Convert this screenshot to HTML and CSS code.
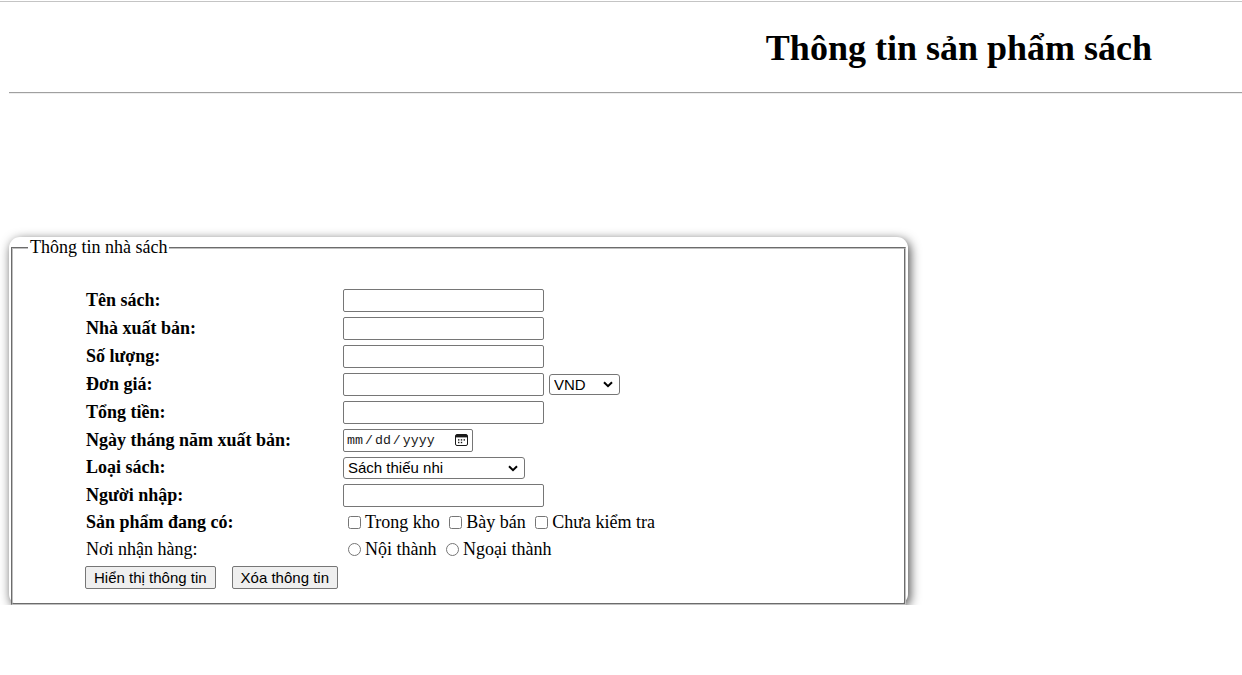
FILE: index.html
```html
<!DOCTYPE html>
<html lang="vi">
<head>
<meta charset="utf-8">
<title>Thông tin sản phẩm sách</title>
<link rel="stylesheet" href="styles.css">
</head>
<body>
<div class="top-rule"></div>
<div class="page">
  <header class="page-header">
    <h1 class="page-title">Thông tin sản phẩm sách</h1>
  </header>
  <hr class="divider">
  <div class="panel">
    <fieldset class="book-form">
      <legend class="book-legend">Thông tin nhà sách</legend>
      <table class="form-table">
        <tr>
          <td class="label-cell strong">Tên sách:</td>
          <td class="field-cell"><input class="text-input" type="text"></td>
        </tr>
        <tr>
          <td class="label-cell strong">Nhà xuất bản:</td>
          <td class="field-cell"><input class="text-input" type="text"></td>
        </tr>
        <tr>
          <td class="label-cell strong">Số lượng:</td>
          <td class="field-cell"><input class="text-input" type="text"></td>
        </tr>
        <tr>
          <td class="label-cell strong">Đơn giá:</td>
          <td class="field-cell">
            <div class="inline-fields">
              <input class="text-input" type="text">
              <span class="select-wrap">
                <select class="select-currency"><option>VND</option><option>USD</option></select>
                <svg class="chevron" width="10" height="7" viewBox="0 0 10 7"><path d="M1 1.2 L5 5.2 L9 1.2" fill="none" stroke="#000" stroke-width="2"/></svg>
              </span>
            </div>
          </td>
        </tr>
        <tr>
          <td class="label-cell strong">Tổng tiền:</td>
          <td class="field-cell"><input class="text-input" type="text"></td>
        </tr>
        <tr>
          <td class="label-cell strong">Ngày tháng năm xuất bản:</td>
          <td class="field-cell">
            <span class="date-field">
              <input class="date-text" type="text" placeholder="mm / dd / yyyy">
              <svg class="calendar" width="13" height="12" viewBox="0 0 13 12">
                <rect x="0.5" y="0.5" width="12" height="11" rx="1.5" fill="none" stroke="#1a1a1a" stroke-width="1"/>
                <rect x="1" y="1" width="11" height="2.4" fill="#1a1a1a"/>
                <rect x="3" y="5.2" width="1.4" height="1.4" fill="#1a1a1a"/>
                <rect x="5.8" y="5.2" width="1.4" height="1.4" fill="#1a1a1a"/>
                <rect x="8.6" y="5.2" width="1.4" height="1.4" fill="#1a1a1a"/>
                <rect x="3" y="7.8" width="1.4" height="1.4" fill="#1a1a1a"/>
                <rect x="5.8" y="7.8" width="1.4" height="1.4" fill="#1a1a1a"/>
              </svg>
            </span>
          </td>
        </tr>
        <tr>
          <td class="label-cell strong">Loại sách:</td>
          <td class="field-cell">
            <span class="select-wrap">
              <select class="select-type"><option>Sách thiếu nhi</option><option>Sách giáo khoa</option></select>
              <svg class="chevron" width="10" height="7" viewBox="0 0 10 7"><path d="M1 1.2 L5 5.2 L9 1.2" fill="none" stroke="#000" stroke-width="2"/></svg>
            </span>
          </td>
        </tr>
        <tr>
          <td class="label-cell strong">Người nhập:</td>
          <td class="field-cell"><input class="text-input" type="text"></td>
        </tr>
        <tr>
          <td class="label-cell strong">Sản phẩm đang có:</td>
          <td class="field-cell">
            <label class="choice"><input class="check" type="checkbox">Trong kho</label>
            <label class="choice"><input class="check" type="checkbox">Bày bán</label>
            <label class="choice"><input class="check" type="checkbox">Chưa kiểm tra</label>
          </td>
        </tr>
        <tr>
          <td class="label-cell">Nơi nhận hàng:</td>
          <td class="field-cell">
            <label class="choice"><input class="radio" type="radio" name="noinhan">Nội thành</label>
            <label class="choice"><input class="radio" type="radio" name="noinhan">Ngoại thành</label>
          </td>
        </tr>
        <tr>
          <td class="button-cell" colspan="2">
            <div class="button-row">
              <button class="btn" type="button">Hiển thị thông tin</button>
              <button class="btn" type="button">Xóa thông tin</button>
            </div>
          </td>
        </tr>
      </table>
    </fieldset>
  </div>
</div>
</body>
</html>
```

FILE: styles.css
```css
html, body {
  margin: 0;
  padding: 0;
  background: #ffffff;
}

body {
  font-family: "Liberation Serif", "Times New Roman", serif;
  font-size: 18px;
  color: #000000;
}

.top-rule {
  margin-top: 1px;
  border-top: 1px solid #c4c4c4;
}

.page {
  padding-left: 9px;
}

.page-header {
  padding-top: 26px;
  text-align: right;
  padding-right: 90px;
}

.page-title {
  margin: 0;
  font-size: 36px;
  font-weight: bold;
  line-height: 41px;
}

.divider {
  margin: 23px 0 0 0;
  height: 0;
  border: 0;
  border-top: 1px solid #a0a0a0;
  border-bottom: 1px solid #eeeeee;
}

.panel {
  margin-top: 143px;
  width: 899px;
  border-radius: 11px;
  box-shadow: 2px 3px 11px rgba(0, 0, 0, 0.72);
  background: #ffffff;
}

.book-form {
  margin: 0 2px;
  padding: 6px 13px 11px 13px;
  border: 2px groove #c0c0c0;
}

.book-legend {
  margin-left: 2px;
  padding: 0 2px;
  line-height: 21px;
}

.form-table {
  margin: 21px 0 0 57px;
  border-spacing: 2px;
}

.form-table td {
  height: 22px;
  padding: 1.5px 1px;
  vertical-align: middle;
}

.label-cell {
  width: 253px;
  white-space: nowrap;
}

.strong {
  font-weight: bold;
}

.inline-fields {
  display: flex;
  align-items: center;
  gap: 5px;
}

.text-input {
  display: block;
  box-sizing: border-box;
  width: 201px;
  height: 23px;
  margin: 0;
  padding: 1px 2px;
  border: 1px solid #767676;
  border-radius: 2px;
  font-family: "Liberation Sans", Arial, sans-serif;
  font-size: 15px;
}

.date-field {
  box-sizing: border-box;
  display: flex;
  align-items: center;
  width: 130px;
  height: 23px;
  padding: 0 4px 0 3px;
  border: 1px solid #767676;
  border-radius: 2px;
}

.date-text {
  flex: 1;
  min-width: 0;
  margin: 0;
  padding: 0;
  border: 0;
  outline: none;
  background: transparent;
  font-family: "Liberation Mono", "DejaVu Sans Mono", monospace;
  font-size: 13.3px;
  word-spacing: -6px;
}

.date-text::placeholder {
  color: #1a1a1a;
  opacity: 1;
  word-spacing: -6px;
}

.calendar {
  flex: none;
  margin-left: 4px;
}

.select-wrap {
  position: relative;
  display: block;
  width: fit-content;
  line-height: 0;
}

.select-currency,
.select-type {
  appearance: none;
  -webkit-appearance: none;
  box-sizing: border-box;
  display: block;
  margin: 0;
  padding: 0 0 0 4px;
  border: 1px solid #767676;
  border-radius: 3px;
  background: #ffffff;
  color: #000000;
  font-family: "Liberation Sans", Arial, sans-serif;
  font-size: 15px;
}

.select-currency {
  width: 71px;
  height: 21px;
}

.select-type {
  width: 182px;
  height: 22px;
}

.chevron {
  position: absolute;
  right: 7px;
  top: 50%;
  margin-top: -3px;
  pointer-events: none;
}

.choice {
  white-space: nowrap;
}

.check {
  width: 13px;
  height: 13px;
  margin: 3px 4px 3px 5px;
  vertical-align: -1px;
}

.radio {
  width: 13px;
  height: 13px;
  margin: 3px 4px 0 5px;
  vertical-align: -1px;
}

.button-row {
  display: flex;
  gap: 16px;
  margin-left: -1px;
}

.btn {
  box-sizing: border-box;
  height: 23px;
  margin: 0;
  padding: 1px 8px;
  border: 1px solid #767676;
  border-radius: 2px;
  background: #efefef;
  color: #000000;
  font-family: "Liberation Sans", Arial, sans-serif;
  font-size: 15px;
}
```
